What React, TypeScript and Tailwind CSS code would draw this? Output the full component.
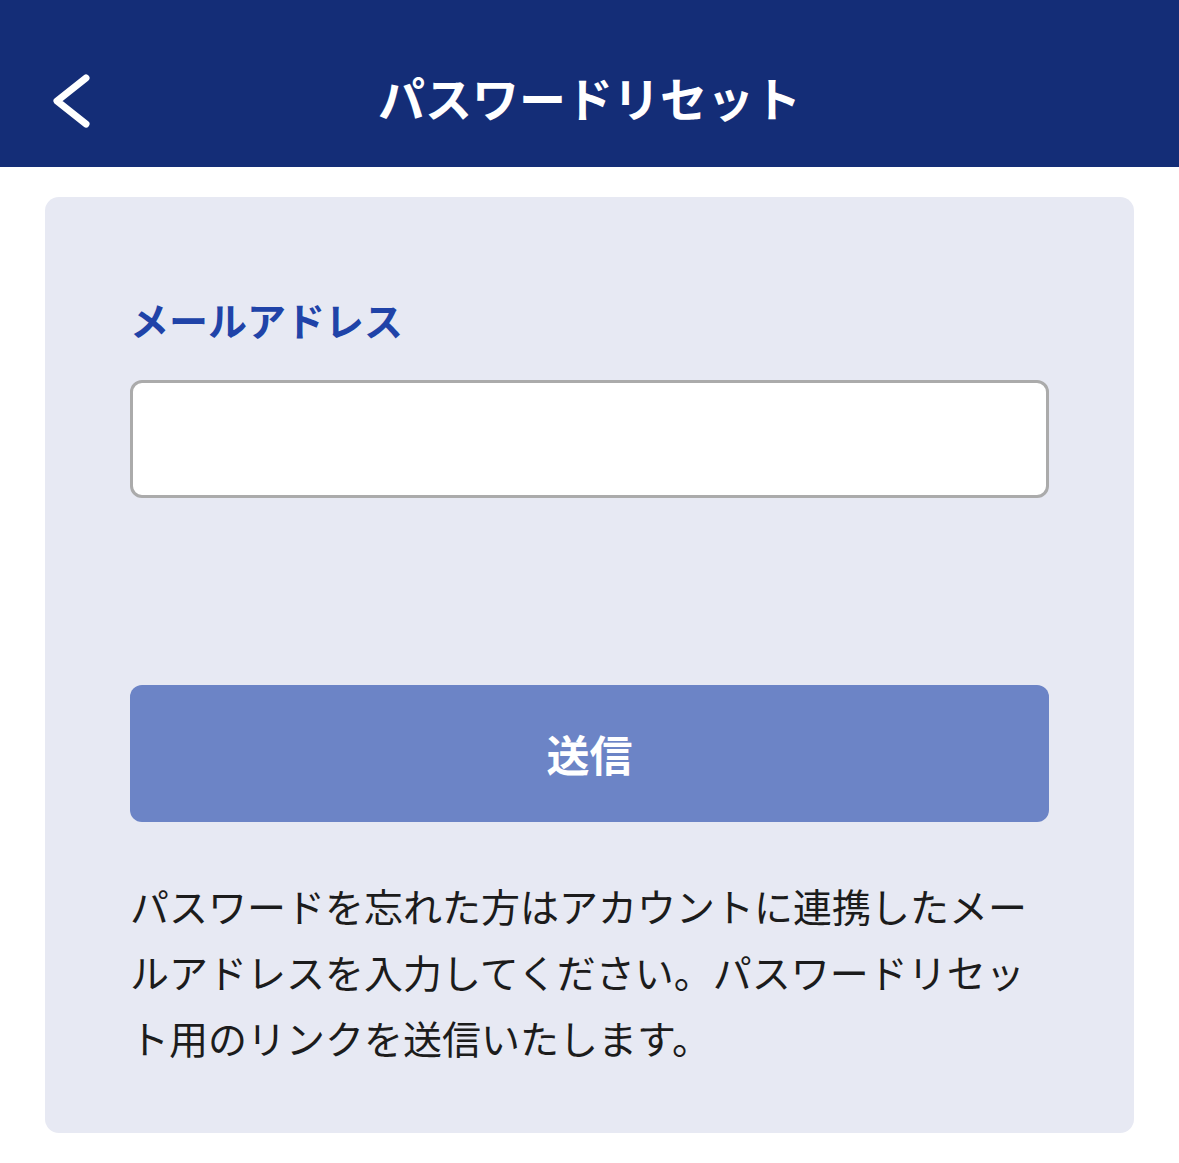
const jp = { fontFamily: '"Noto Sans CJK JP", "Noto Sans", sans-serif' }

function Header() {
  return (
    <header className="relative flex h-[167px] items-center justify-center bg-[#142d77]">
      <button className="absolute left-[44px] top-[68px] flex h-[66px] w-[52px] items-center justify-center">
        <svg width="52" height="66" viewBox="0 0 52 66" fill="none">
          <polyline
            points="42,10 13,33 42,56"
            stroke="white"
            strokeWidth="7"
            strokeLinecap="round"
            strokeLinejoin="round"
          />
        </svg>
      </button>
      <h1 className="mt-[26px] text-[47px] font-semibold leading-none text-white">パスワードリセット</h1>
    </header>
  )
}

export default function App() {
  return (
    <div className="min-h-[1163px] bg-white" style={jp}>
      <Header />
      <main className="px-[45px] pt-[30px]">
        <section className="flex flex-col rounded-[14px] bg-[#e7e9f3] px-[85px] pb-[63px] pt-[94px]">
          <label className="text-[39px] font-bold leading-[57px] text-[#2043a8]">メールアドレス</label>
          <input
            type="email"
            className="mt-[32px] h-[118px] w-full rounded-[12px] border-[3px] border-[#ababab] bg-white px-5 text-[36px] outline-none"
          />
          <button className="mt-[187px] flex h-[137px] w-full items-center justify-center rounded-[12px] bg-[#6c84c6] text-[43px] font-bold text-white">
            送信
          </button>
          <p className="mt-[50px] text-[39px] leading-[66px] text-[#1c1c1c]">
            パスワードを忘れた方はアカウントに連携したメールアドレスを入力してください。パスワードリセット用のリンクを送信いたします。
          </p>
        </section>
      </main>
    </div>
  )
}
